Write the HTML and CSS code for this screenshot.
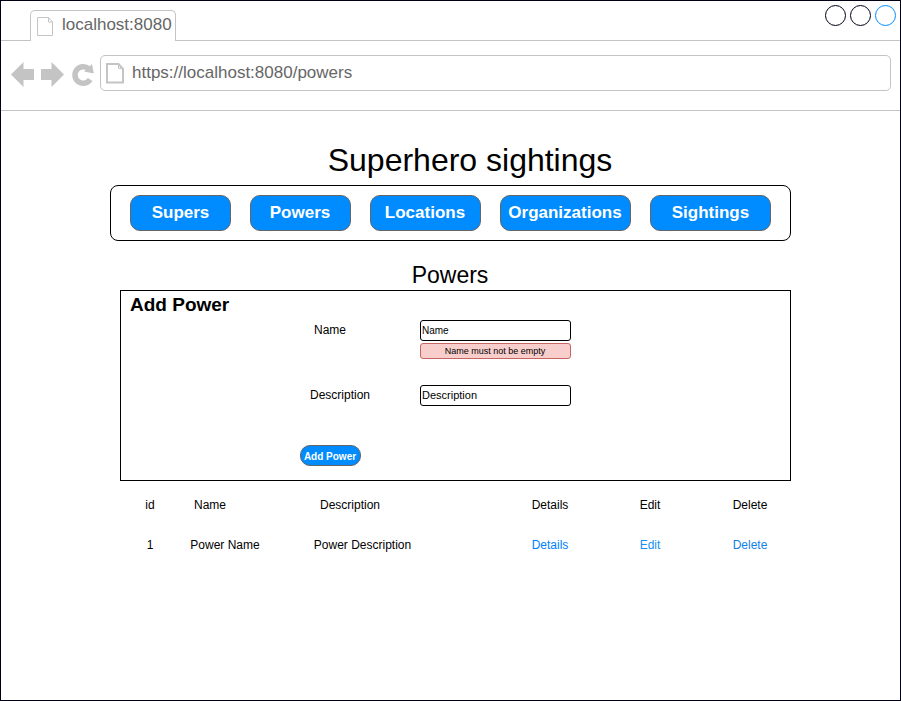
FILE: index.html
```html
<!DOCTYPE html>
<html lang="en">
<head>
<meta charset="utf-8">
<title>Superhero sightings</title>
<link rel="stylesheet" href="styles.css">
</head>
<body>
<div class="window">
  <header class="tabs">
    <div class="tab">
      <svg class="tab-icon" width="17" height="20" viewBox="0 0 17 20"><path d="M.5 .5H11.5L15.5 5V18.5H.5ZM11.5 .5V5H15.5"/></svg>
      <span>localhost:8080</span>
    </div>
    <svg class="controls" width="72" height="22" viewBox="0 0 72 22"><circle cx="10.5" cy="10.5" r="10"/><circle cx="35.5" cy="10.5" r="10"/><circle class="active" cx="60.5" cy="10.5" r="10"/></svg>
  </header>
  <div class="toolbar">
    <svg class="browse" width="84" height="26" viewBox="0 0 84 26">
      <path d="M0 12.5L12.5 0V7H23V18H12.5V25Z"/>
      <path d="M53 12.5L40.5 0V7H30V18H40.5V25Z"/>
      <path class="reload" d="M79.2 17.5A8.3 8.3 0 1 1 77.6 6.6"/>
      <path d="M81 2L82.8 11.6L73 9.6Z"/>
    </svg>
    <div class="address">
      <svg class="page-icon" width="19" height="21" viewBox="0 0 19 21"><path d="M1 1H12.5L17 6V19.5H1Z"/><path class="fold" d="M12.5 1V5.5H17"/></svg>
      <span>https://localhost:8080/powers</span>
    </div>
  </div>
  <main class="page">
    <h1>Superhero sightings</h1>
    <nav>
      <a class="nav-supers">Supers</a><a class="nav-powers">Powers</a><a class="nav-locations">Locations</a><a class="nav-organizations">Organizations</a><a class="nav-sightings">Sightings</a>
    </nav>
    <h2>Powers</h2>
    <section class="form">
      <h3>Add Power</h3>
      <div class="field">
        <label class="label-name">Name</label>
        <div class="control"><div class="input input-name">Name</div><div class="error">Name must not be empty</div></div>
      </div>
      <div class="field">
        <label>Description</label>
        <div class="control"><div class="input">Description</div></div>
      </div>
      <div class="submit">Add Power</div>
    </section>
    <div class="table">
      <div class="row head"><span>id</span><span>Name</span><span>Description</span><span class="details">Details</span><span>Edit</span><span>Delete</span></div>
      <div class="row"><span>1</span><span>Power Name</span><span>Power Description</span><a class="details">Details</a><a class="edit">Edit</a><a class="delete">Delete</a></div>
    </div>
  </main>
</div>
</body>
</html>
```
FILE: styles.css
```css
* { box-sizing: border-box; }
body {
  margin: 0;
  font: 12px/14px "Liberation Sans", Arial, sans-serif;
  color: #000;
  background: #fff;
}
svg { display: block; fill: none; flex: none; }
h1, h2, h3 { margin: 0; font-weight: 400; }
.window { width: 901px; height: 701px; border: 1px solid #000014; }

.tabs {
  height: 40px;
  border-bottom: 1px solid #c4c4c4;
  padding: 9px 0 0 29px;
  display: flex;
  justify-content: space-between;
}
.tab {
  width: 146px;
  height: 31px;
  border: 1px solid #c4c4c4;
  border-bottom: 0;
  border-radius: 5px 5px 0 0;
  background: #fff;
  display: flex;
  padding: 5px 0 0 6px;
  font-size: 17px;
  line-height: 17px;
  color: #666;
}
.tab span { margin-left: 8px; }
.tab-icon { stroke: #c4c4c4; margin-top: 1px; }
.controls { stroke: #000014; margin: -5px 3px 0 0; }
.controls .active { stroke: #008cff; }

.toolbar {
  height: 70px;
  border-bottom: 1px solid #c4c4c4;
  display: flex;
  padding: 14px 9px 0 10px;
}
.browse { fill: #c4c4c4; margin: 7px 5px 0 0; }
.browse .reload { fill: none; stroke: #c4c4c4; stroke-width: 5.5; }
.address {
  flex: 1;
  height: 36px;
  border: 1px solid #c4c4c4;
  border-radius: 5px;
  display: flex;
  padding: 7px 0 0 5px;
  font-size: 17px;
  line-height: 20px;
  color: #666;
}
.address span { margin-left: 7px; }
.page-icon { stroke: #c4c4c4; stroke-width: 2; }
.page-icon .fold { stroke-width: 1; }

.page { width: 681px; margin-left: 109px; padding-top: 31px; }
h1 { font-size: 32px; line-height: 36px; text-align: center; padding-left: 39px; }
nav {
  height: 56px;
  margin-top: 7px;
  border: 1px solid #000;
  border-radius: 8px;
  padding: 9px 19px;
  display: flex;
  gap: 19px;
}
nav a {
  height: 36px;
  border: 1px solid #666;
  border-radius: 10px;
  background: #008cff;
  color: #fff;
  font-size: 17px;
  line-height: 33px;
  font-weight: 700;
  text-align: center;
}
.nav-supers, .nav-powers { width: 101px; }
.nav-powers { padding-right: 1px; }
.nav-locations { width: 111px; padding-right: 1px; }
.nav-organizations { width: 131px; padding-right: 1px; }
.nav-sightings { width: 121px; }
h2 { font-size: 23px; line-height: 26px; margin-top: 21px; text-align: center; padding-right: 1px; }
.form {
  width: 671px;
  height: 191px;
  margin: 2px 0 0 10px;
  border: 1px solid #000;
}
h3 { font-size: 19px; line-height: 22px; font-weight: 700; padding-top: 3px; margin: 0 0 4px 9px; }
.field { display: flex; height: 65px; padding-left: 159px; }
.field label { width: 120px; padding-top: 3px; text-align: center; margin-right: 20px; }
.field .label-name { width: 100px; margin-right: 40px; }
.control { width: 151px; }
.input {
  height: 21px;
  border: 1px solid #000;
  border-radius: 3px;
  padding-left: 1px;
  font-size: 11px;
  line-height: 19px;
}
.input-name { font-size: 10px; }
.error {
  height: 16px;
  margin-top: 1.5px;
  border: 1px solid #c76562;
  border-radius: 3px;
  background: #f8cecc;
  font-size: 9px;
  line-height: 15px;
  text-align: center;
  padding-right: 1px;
}
.submit {
  width: 61px;
  height: 21px;
  margin: -5px 0 0 179px;
  border: 1px solid #666;
  border-radius: 10px;
  background: #008cff;
  color: #fff;
  font-size: 10px;
  line-height: 21px;
  font-weight: 700;
  text-align: center;
  padding-right: 1px;
}
.table { margin: 17px 0 0 20px; text-align: center; }
.row {
  display: grid;
  grid-template-columns: 40px 110px 165px 155px 100px 100px;
  margin-bottom: 26px;
}
.head { grid-template-columns: 40px 80px 200px 150px 100px 100px; }
.details { width: 100px; justify-self: end; }
.row a { color: #007fff; }
.row .edit { color: #188ff5; }
.row .delete { color: #1080e8; }
```
